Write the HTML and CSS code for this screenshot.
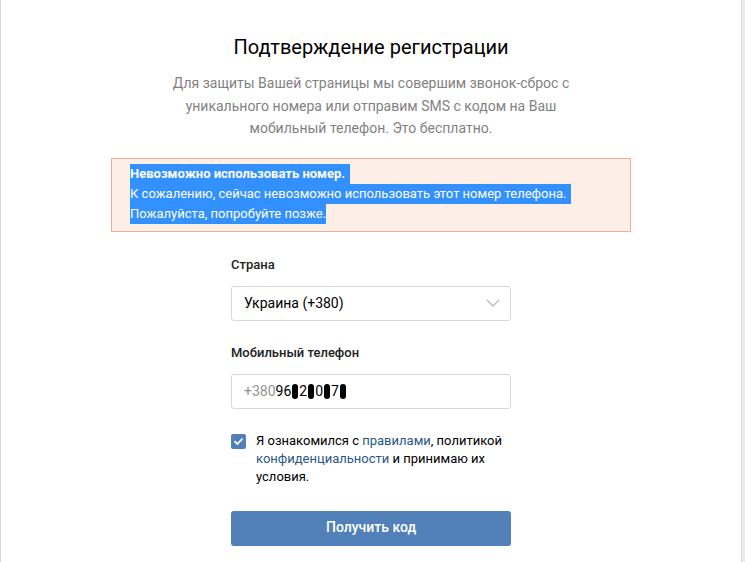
FILE: index.html
```html
<!DOCTYPE html>
<html>
<head>
	<title>Подтверждение регистрации</title>
	<meta charset="utf-8">
	<link rel="stylesheet" href="styles.css">
</head>
<body>
	<!--page start-->
	<div class="page">
		<div class="content">
			<h1 class="title">Подтверждение регистрации</h1>
			<p class="desc">Для защиты Вашей страницы мы совершим звонок-сброс с<br>уникального номера или отправим SMS с кодом на Ваш<br>мобильный телефон. Это бесплатно.</p>

			<div class="box_error">
				<span class="sel sel_nl"><b>Невозможно использовать номер.</b></span><br>
				<span class="sel sel_nl">К сожалению, сейчас невозможно использовать этот номер телефона.</span><br>
				<span class="sel">Пожалуйста, попробуйте позже.</span>
			</div>

			<div class="form">
				<div class="f_label">Страна</div>
				<div class="f_select">
					<span>Украина (+380)</span>
					<svg class="chevron" width="14" height="8" viewBox="0 0 14 8"><polyline points="1,1 7,7 13,1" fill="none" stroke="#b5bcc6" stroke-width="1.4"/></svg>
				</div>

				<div class="f_label f_label2">Мобильный телефон</div>
				<div class="f_input">
					<span class="prefix">+380</span>96<span class="blot"></span>2<span class="blot"></span>0<span class="blot"></span>7<span class="blot"></span>
				</div>

				<div class="f_check">
					<span class="checkbox">
						<svg width="15" height="15" viewBox="0 0 15 15"><polyline points="4,7.6 6.4,10 11,5.2" fill="none" stroke="#fff" stroke-width="1.8" stroke-linecap="round" stroke-linejoin="round"/></svg>
					</span>
					<div class="check_text">Я ознакомился с <a href="#">правилами</a>, политикой <a href="#">конфиденциальности</a> и принимаю их условия.</div>
				</div>

				<div class="btn">Получить код</div>
			</div>
		</div>
	</div>
	<!--end page-->
</body>
</html>
```

FILE: styles.css
```css
*{margin:0;padding:0;box-sizing:border-box;}
body{background:#ebebeb;font-family:Roboto,"Noto Sans",sans-serif;font-size:13px;color:#000;}
/*page start*/
.page{width:742px;height:562px;background:#fff;border-left:1px solid #d5d9e0;border-right:1px solid #dcdcdc;overflow:hidden;}
.content{padding-top:35px;}
.title{font-size:20px;line-height:24px;font-weight:400;text-align:center;color:#000;}
.desc{margin-top:13px;text-align:center;font-size:14px;line-height:22.5px;color:#828282;}
.box_error{width:520px;margin:18px auto 0;background:#fdeee8;border:1px solid #f0ab99;padding:5px 18px 7px;font-size:13px;line-height:20px;color:#fff;}
.box_error .sel{display:inline-block;background:#3390ff;}
.box_error .sel_nl{padding-right:5px;}
.form{width:280px;margin:25px auto 0;}
.f_label{font-size:13px;line-height:16px;font-weight:500;color:#222;}
.f_label2{margin-top:24px;}
.f_select,.f_input{margin-top:13px;height:35px;border:1px solid #d3d9de;border-radius:3px;padding:0 12px;display:flex;align-items:center;font-size:14px;color:#000;}
.f_select{justify-content:space-between;}
.f_select .chevron{margin-right:-2px;}
.f_input .prefix{color:#939393;}
.f_input .blot{display:inline-block;width:6px;height:15px;background:#000;border-radius:3px;margin:0 1px;vertical-align:middle;}
.f_check{margin-top:23px;display:flex;gap:10px;}
.checkbox{flex:none;width:15px;height:15px;margin-top:2px;background:#5181b8;border-radius:2px;}
.checkbox svg{display:block;}
.check_text{width:250px;font-size:13px;line-height:18px;color:#000;}
.check_text a{color:#2a5885;text-decoration:none;}
.btn{margin-top:25px;height:35px;background:#5181b8;border-radius:3px;color:#fff;font-size:14px;font-weight:500;line-height:33px;text-align:center;}
/*end page*/
```
